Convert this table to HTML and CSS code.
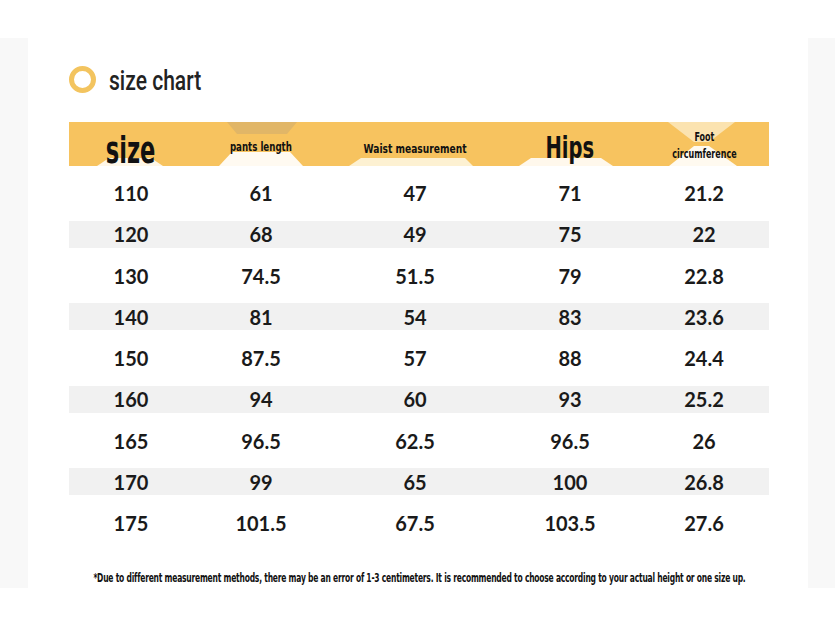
FILE: index.html
```html
<!DOCTYPE html>
<html lang="en">
<head>
<meta charset="utf-8">
<title>size chart</title>
<link rel="stylesheet" href="styles.css">
</head>
<body>
<div class="top-space"></div>
<div class="panel">
  <div class="card">
    <div class="title-row">
      <span class="ring"></span>
      <h1 class="title"><span class="title-text">size chart</span></h1>
    </div>
    <div class="chart">
      <div class="head">
        <svg class="head-deco" viewBox="0 0 700 44" preserveAspectRatio="none" aria-hidden="true">
          <polygon points="28,44 40,36 82,36 94,44" fill="#fff7e8"/>
          <polygon points="158,0 228,0 218,12 168,12" fill="#e1b667"/>
          <polygon points="150,44 163,30 221,30 234,44" fill="#fffaf1"/>
          <polygon points="280,44 292,36 396,36 404,44" fill="#fdf1d2"/>
          <polygon points="450,44 462,36 532,36 544,44" fill="#fff8ec"/>
          <polygon points="599,0 666,0 640,20 625,20" fill="#fbe3b0"/>
          <polygon points="600,44 625,24 640,24 668,44" fill="#fffaf0"/>
        </svg>
        <div class="hcell c1 big"><span class="cond">size</span></div>
        <div class="hcell c2 small"><span class="cond">pants length</span></div>
        <div class="hcell c3 small"><span class="cond">Waist measurement</span></div>
        <div class="hcell c4 big hips"><span class="cond">Hips</span></div>
        <div class="hcell c5 tiny"><span class="cond">Foot<br>circumference</span></div>
      </div>
      <div class="rows">
        <div class="row"><span>110</span><span>61</span><span>47</span><span>71</span><span>21.2</span></div>
        <div class="row alt"><span>120</span><span>68</span><span>49</span><span>75</span><span>22</span></div>
        <div class="row"><span>130</span><span>74.5</span><span>51.5</span><span>79</span><span>22.8</span></div>
        <div class="row alt"><span>140</span><span>81</span><span>54</span><span>83</span><span>23.6</span></div>
        <div class="row"><span>150</span><span>87.5</span><span>57</span><span>88</span><span>24.4</span></div>
        <div class="row alt"><span>160</span><span>94</span><span>60</span><span>93</span><span>25.2</span></div>
        <div class="row"><span>165</span><span>96.5</span><span>62.5</span><span>96.5</span><span>26</span></div>
        <div class="row alt"><span>170</span><span>99</span><span>65</span><span>100</span><span>26.8</span></div>
        <div class="row"><span>175</span><span>101.5</span><span>67.5</span><span>103.5</span><span>27.6</span></div>
      </div>
    </div>
    <div class="note"><span class="note-text">*Due to different measurement methods, there may be an error of 1-3 centimeters. It is recommended to choose according to your actual height or one size up.</span></div>
  </div>
</div>
</body>
</html>
```

FILE: styles.css
```css
html, body {
  margin: 0;
  padding: 0;
  background: #ffffff;
}

body {
  width: 835px;
  height: 627px;
  overflow: hidden;
  font-family: "DejaVu Sans Condensed", "DejaVu Sans", sans-serif;
  color: #111;
}

.top-space {
  height: 38px;
}

.panel {
  height: 550px;
  background: #f8f8f8;
  padding: 0 27px 0 28px;
}

.card {
  height: 100%;
  background: #ffffff;
  padding: 27px 39px 0 41px;
  box-sizing: border-box;
}

.title-row {
  display: flex;
  align-items: center;
  height: 28px;
}

.ring {
  width: 27px;
  height: 27px;
  box-sizing: border-box;
  border: 5px solid #f3c45f;
  border-radius: 50%;
  flex: none;
}

.title {
  margin: 0 0 0 13px;
  font-family: "Roboto", sans-serif;
  font-size: 27px;
  font-weight: 500;
  color: #222;
  line-height: 28px;
  position: relative;
  top: 2px;
}

.title-text {
  display: inline-block;
  transform: scaleX(0.78);
  transform-origin: left center;
  white-space: nowrap;
}

.chart {
  margin-top: 29px;
  width: 700px;
}

.head {
  position: relative;
  height: 44px;
  background: #f7c35f;
  display: grid;
  grid-template-columns: 124px 136px 172px 138px 130px;
  align-items: end;
}

.head-deco {
  position: absolute;
  left: 0;
  top: 0;
  width: 100%;
  height: 100%;
}

.hcell {
  position: relative;
  text-align: center;
  font-weight: 700;
  color: #111;
  white-space: nowrap;
}

.cond {
  display: inline-block;
  transform: scaleX(0.74);
}

.big {
  font-size: 38px;
  line-height: 38px;
}

.c1.big {
  top: 3px;
}

.c1 .cond {
  transform: scaleX(0.66);
}

.hips {
  align-self: center;
  font-size: 31px;
  line-height: 36px;
  top: 3px;
}

.hips .cond {
  transform: scaleX(0.7);
}

.small {
  align-self: start;
  padding-top: 17px;
  font-size: 13px;
  line-height: 16px;
}

.c3.small {
  padding-top: 19px;
}

.c3 .cond {
  transform: scaleX(0.78);
}

.tiny {
  align-self: center;
  font-size: 12px;
  line-height: 17px;
  top: 2px;
}

.rows {
  display: grid;
  grid-auto-rows: 27px;
  row-gap: 14.25px;
  padding-top: 13.5px;
}

.row {
  display: grid;
  grid-template-columns: 124px 136px 172px 138px 130px;
  align-items: center;
  text-align: center;
  font-family: "Lato", "Open Sans", sans-serif;
  font-weight: 700;
  font-size: 20px;
  color: #1a1a1a;
}

.row.alt {
  background: #f1f1f1;
}

.note {
  margin-top: 34px;
  width: 700px;
  display: flex;
  justify-content: center;
  font-size: 11.5px;
  line-height: 14px;
  font-weight: 700;
  color: #111;
  white-space: nowrap;
}

.note-text {
  display: inline-block;
  letter-spacing: -0.3px;
  transform: scaleX(0.732);
  flex: none;
}
```
